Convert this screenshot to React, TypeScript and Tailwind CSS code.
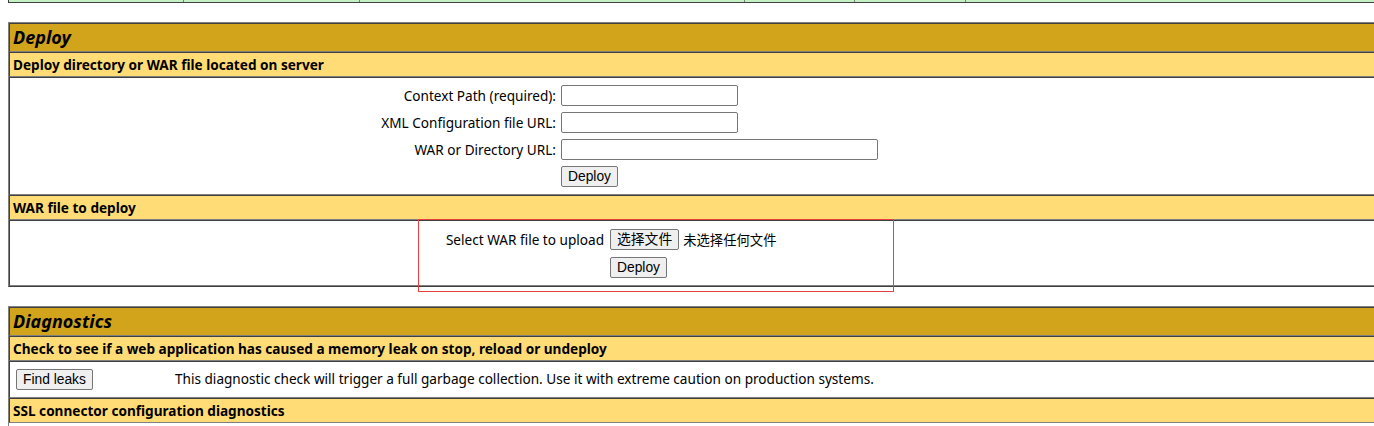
import React from "react";

const FONT = { fontFamily: '"Noto Sans", "Noto Sans CJK SC", sans-serif' };

function Btn({ children, className = "" }: { children: React.ReactNode; className?: string }) {
  return (
    <button
      className={
        "h-[21px] px-[6px] bg-[#efefef] border border-[#767676] rounded-[2px] text-[13.8px] leading-[15px] text-black " +
        className
      }
      style={{ fontFamily: '"Liberation Sans", "Noto Sans CJK SC", sans-serif' }}
    >
      {children}
    </button>
  );
}

function Input({ w }: { w: string }) {
  return <input type="text" className={"h-[21px] bg-white border border-[#767676] rounded-[2px] " + w} />;
}

export default function App() {
  return (
    <div className="relative w-[1374px] h-[426px] overflow-hidden bg-white text-black" style={FONT}>
      {/* top strip (end of previous table) */}
      <div className="ml-2 w-[1500px] h-[3px] flex border-b border-b-[#404040] border-l border-l-[#404040] bg-[#C3F3C3]">
        <div className="w-[175px] border-r border-r-[#808080]" />
        <div className="w-[176px] border-r border-r-[#808080]" />
        <div className="w-[385px] border-r border-r-[#808080]" />
        <div className="w-[110px] border-r border-r-[#808080]" />
        <div className="w-[111px] border-r border-r-[#808080]" />
        <div className="flex-1" />
      </div>

      {/* Deploy table */}
      <div className="mt-[19px] ml-2 w-[1500px] border border-t-[#808080] border-l-[#808080] border-b-[#404040] border-r-[#404040]">
        <div className="border border-t-[#404040] border-l-[#404040] border-b-[#808080] border-r-[#808080] bg-[#D2A41C] p-[3px] text-[18px] leading-[21px] font-bold italic">
          Deploy
        </div>
        <div className="border border-t-[#404040] border-l-[#404040] border-b-[#808080] border-r-[#808080] bg-[#FFDC75] p-[3px] text-[13.6px] leading-[17px] font-bold">
          Deploy directory or WAR file located on server
        </div>
        <div className="border border-t-[#404040] border-l-[#404040] border-b-[#808080] border-r-[#808080] h-[118px] pt-[7px]">
          <div className="ml-[360px] grid grid-cols-[188px_auto] gap-y-[6px] text-[13.6px] leading-[21px]">
            <div className="text-right pr-[2px]">Context Path (required):</div>
            <div className="pl-[3px]"><Input w="w-[177px]" /></div>
            <div className="text-right pr-[2px]">XML Configuration file URL:</div>
            <div className="pl-[3px]"><Input w="w-[177px]" /></div>
            <div className="text-right pr-[2px]">WAR or Directory URL:</div>
            <div className="pl-[3px]"><Input w="w-[317px]" /></div>
            <div />
            <div className="pl-[3px] flex"><Btn>Deploy</Btn></div>
          </div>
        </div>
        <div className="border border-t-[#404040] border-l-[#404040] border-b-[#808080] border-r-[#808080] bg-[#FFDC75] p-[3px] text-[13.6px] leading-[17px] font-bold">
          WAR file to deploy
        </div>
        <div className="border border-t-[#404040] border-l-[#404040] border-b-[#808080] border-r-[#808080] h-[66px] pt-[8px]">
          <div className="ml-[420px] grid grid-cols-[180px_auto] gap-y-[7px] text-[13.6px] leading-[21px]">
            <div className="text-right pr-[6px] whitespace-nowrap">Select WAR file to upload</div>
            <div className="flex items-center gap-[4px]">
              <Btn>选择文件</Btn>
              <span className="text-[13.33px]" style={{ fontFamily: '"Noto Sans CJK SC", sans-serif' }}>未选择任何文件</span>
            </div>
            <div />
            <div className="flex"><Btn>Deploy</Btn></div>
          </div>
        </div>
      </div>

      {/* Diagnostics table */}
      <div className="mt-[19px] ml-2 w-[1500px] border border-t-[#808080] border-l-[#808080] border-b-[#404040] border-r-[#404040]">
        <div className="border border-t-[#404040] border-l-[#404040] border-b-[#808080] border-r-[#808080] bg-[#D2A41C] p-[3px] text-[18px] leading-[21px] font-bold italic">
          Diagnostics
        </div>
        <div className="border border-t-[#404040] border-l-[#404040] border-b-[#808080] border-r-[#808080] bg-[#FFDC75] p-[3px] text-[13.6px] leading-[17px] font-bold">
          Check to see if a web application has caused a memory leak on stop, reload or undeploy
        </div>
        <div className="border border-t-[#404040] border-l-[#404040] border-b-[#808080] border-r-[#808080] h-[37px] flex items-center text-[13.6px]">
          <div className="w-[165px] pl-[6px] flex"><Btn>Find leaks</Btn></div>
          <div>This diagnostic check will trigger a full garbage collection. Use it with extreme caution on production systems.</div>
        </div>
        <div className="border border-t-[#404040] border-l-[#404040] border-b-[#808080] border-r-[#808080] bg-[#FFDC75] p-[3px] text-[13.6px] leading-[17px] font-bold">
          SSL connector configuration diagnostics
        </div>
        <div className="h-[30px]" />
      </div>

      {/* red annotation box */}
      <div className="absolute left-[418px] top-[219px] w-[476px] h-[73px] border border-[#e8403c] pointer-events-none" />
    </div>
  );
}
